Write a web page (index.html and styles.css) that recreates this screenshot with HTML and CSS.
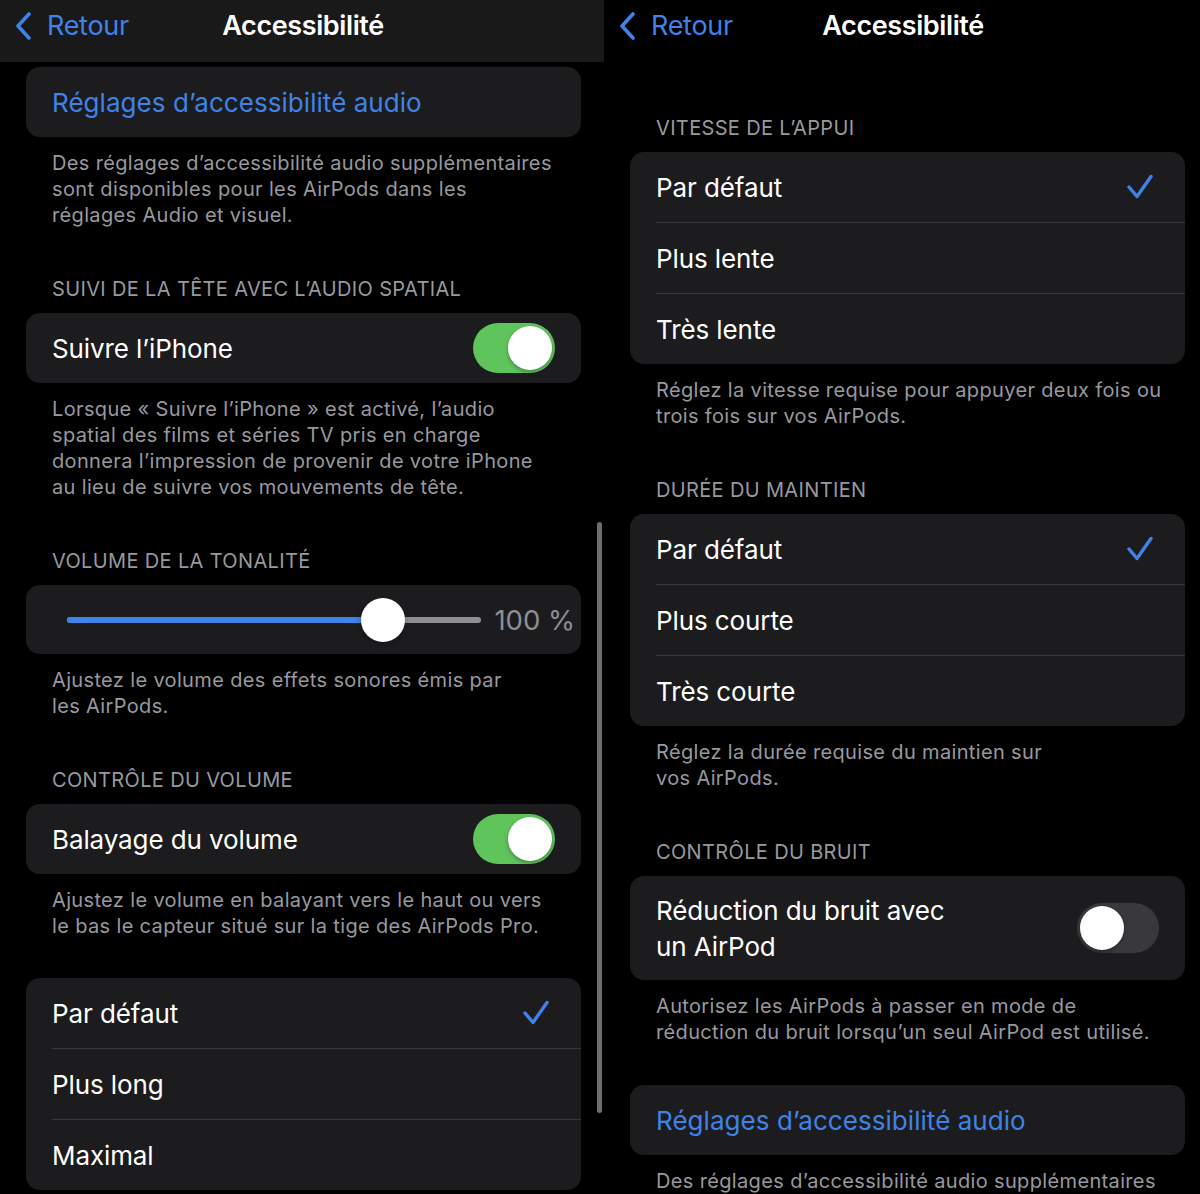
FILE: index.html
```html
<!DOCTYPE html>
<html lang="fr">
<head>
    <meta charset="UTF-8">
    <meta name="viewport" content="width=device-width, initial-scale=1.0">
    <title>Accessibilité</title>
    <link rel="stylesheet" href="styles.css">
</head>
<body>
    <!-- Ecran gauche (défilé) -->
    <div class="screen screen-left">
        <div class="navbar navbar-grey">
            <a class="back" href="#">
                <svg class="chevron" width="17" height="28" viewBox="0 0 17 28"><path d="M14 2 L3 14 L14 26" fill="none" stroke="#3f83e8" stroke-width="3.6" stroke-linecap="round" stroke-linejoin="round"/></svg>
                <span>Retour</span>
            </a>
            <div class="title">Accessibilité</div>
            <div></div>
        </div>

        <div class="content">
            <div class="card first">
                <div class="row"><div class="row-body link">Réglages d’accessibilité audio</div></div>
            </div>
            <p class="footer">Des réglages d’accessibilité audio supplémentaires<br>sont disponibles pour les AirPods dans les<br>réglages Audio et visuel.</p>

            <h3 class="section">Suivi de la tête avec l’audio spatial</h3>
            <div class="card">
                <div class="row"><div class="row-body">Suivre l’iPhone <span class="toggle on"><span class="knob"></span></span></div></div>
            </div>
            <p class="footer">Lorsque « Suivre l’iPhone » est activé, l’audio<br>spatial des films et séries TV pris en charge<br>donnera l’impression de provenir de votre iPhone<br>au lieu de suivre vos mouvements de tête.</p>

            <h3 class="section">Volume de la tonalité</h3>
            <div class="card">
                <div class="slider-row">
                    <div class="track">
                        <div class="fill" style="width: 76.3%"></div>
                        <div class="thumb" style="left: 76.3%"></div>
                    </div>
                    <span class="value">100 %</span>
                </div>
            </div>
            <p class="footer">Ajustez le volume des effets sonores émis par<br>les AirPods.</p>

            <h3 class="section">Contrôle du volume</h3>
            <div class="card">
                <div class="row"><div class="row-body">Balayage du volume <span class="toggle on"><span class="knob"></span></span></div></div>
            </div>
            <p class="footer">Ajustez le volume en balayant vers le haut ou vers<br>le bas le capteur situé sur la tige des AirPods Pro.</p>

            <div class="card list-gap">
                <div class="row"><div class="row-body">Par défaut <svg class="check" width="32" height="26" viewBox="0 0 32 26"><path d="M2 13 L10 22.5 L24 2.5" fill="none" stroke="#3f83e8" stroke-width="3.4" stroke-linecap="round" stroke-linejoin="round"/></svg></div></div>
                <div class="row"><div class="row-body">Plus long</div></div>
                <div class="row"><div class="row-body">Maximal</div></div>
            </div>
        </div>

        <div class="scrollbar"></div>
    </div>

    <!-- Ecran droit -->
    <div class="screen screen-right">
        <div class="navbar">
            <a class="back" href="#">
                <svg class="chevron" width="17" height="28" viewBox="0 0 17 28"><path d="M14 2 L3 14 L14 26" fill="none" stroke="#3f83e8" stroke-width="3.6" stroke-linecap="round" stroke-linejoin="round"/></svg>
                <span>Retour</span>
            </a>
            <div class="title">Accessibilité</div>
            <div></div>
        </div>

        <div class="content">
            <h3 class="section top">Vitesse de l’appui</h3>
            <div class="card">
                <div class="row"><div class="row-body">Par défaut <svg class="check" width="32" height="26" viewBox="0 0 32 26"><path d="M2 13 L10 22.5 L24 2.5" fill="none" stroke="#3f83e8" stroke-width="3.4" stroke-linecap="round" stroke-linejoin="round"/></svg></div></div>
                <div class="row"><div class="row-body">Plus lente</div></div>
                <div class="row"><div class="row-body">Très lente</div></div>
            </div>
            <p class="footer">Réglez la vitesse requise pour appuyer deux fois ou<br>trois fois sur vos AirPods.</p>

            <h3 class="section">Durée du maintien</h3>
            <div class="card">
                <div class="row"><div class="row-body">Par défaut <svg class="check" width="32" height="26" viewBox="0 0 32 26"><path d="M2 13 L10 22.5 L24 2.5" fill="none" stroke="#3f83e8" stroke-width="3.4" stroke-linecap="round" stroke-linejoin="round"/></svg></div></div>
                <div class="row"><div class="row-body">Plus courte</div></div>
                <div class="row"><div class="row-body">Très courte</div></div>
            </div>
            <p class="footer">Réglez la durée requise du maintien sur<br>vos AirPods.</p>

            <h3 class="section">Contrôle du bruit</h3>
            <div class="card">
                <div class="row"><div class="row-body tall">Réduction du bruit avec<br>un AirPod <span class="toggle"><span class="knob"></span></span></div></div>
            </div>
            <p class="footer">Autorisez les AirPods à passer en mode de<br>réduction du bruit lorsqu’un seul AirPod est utilisé.</p>

            <div class="card list-gap-small">
                <div class="row"><div class="row-body link">Réglages d’accessibilité audio</div></div>
            </div>
            <p class="footer">Des réglages d’accessibilité audio supplémentaires</p>
        </div>
    </div>
</body>
</html>
```

FILE: styles.css
```css
* {
    box-sizing: border-box;
}

body {
    margin: 0;
    background-color: #000;
    font-family: Inter, "Noto Sans", sans-serif;
    color: #fff;
    display: flex;
    height: 1194px;
    overflow: hidden;
}

.screen {
    height: 1194px;
    overflow: hidden;
    position: relative;
}

.screen-left {
    width: 604px;
}

.screen-right {
    width: 596px;
}

/* Barre de navigation */
.navbar {
    height: 62px;
    padding-bottom: 11px;
    display: grid;
    grid-template-columns: 1fr auto 1fr;
    align-items: center;
    background-color: #000;
}

.navbar-grey {
    background-color: #191919;
}

.back {
    display: flex;
    align-items: center;
    gap: 15px;
    padding-left: 15px;
    color: #3f83e8;
    text-decoration: none;
    font-size: 27px;
    letter-spacing: -0.3px;
}

.chevron {
    display: block;
}

.title {
    font-size: 27px;
    font-weight: 600;
    letter-spacing: -0.4px;
    padding-left: 2px;
}

/* Contenu */
.content {
    padding-left: 26px;
}

.card {
    width: 555px;
    background-color: #1c1c1e;
    border-radius: 14px;
    overflow: hidden;
}

.card.first {
    margin-top: 5px;
}

.row {
    padding-left: 26px;
}

.row-body {
    height: 70px;
    padding-right: 26px;
    display: flex;
    align-items: center;
    justify-content: space-between;
    font-size: 26px;
    letter-spacing: -0.1px;
}

.row + .row .row-body {
    height: 71px;
    border-top: 1px solid #38383a;
}

.row-body.tall {
    height: 104px;
    line-height: 36px;
    display: block;
    position: relative;
    padding-top: 17px;
}

.row-body.tall .toggle {
    position: absolute;
    right: 26px;
    top: 27px;
}

.link {
    color: #3f83e8;
    letter-spacing: 0.05px;
}

.footer {
    margin: 0;
    padding: 13px 26px 0;
    font-size: 20px;
    line-height: 26px;
    color: #98989e;
    letter-spacing: 0.35px;
}

.section {
    margin: 46px 0 11px;
    padding: 2px 26px 0;
    font-size: 20px;
    line-height: 26px;
    font-weight: 400;
    text-transform: uppercase;
    color: #98989e;
    letter-spacing: 0.35px;
}

.section.top {
    margin-top: 51px;
}

.list-gap {
    margin-top: 39px;
}

.list-gap-small {
    margin-top: 40px;
}

/* Interrupteur */
.toggle {
    width: 82px;
    height: 50px;
    border-radius: 25px;
    background-color: #39393d;
    position: relative;
    flex-shrink: 0;
}

.toggle.on {
    background-color: #5fc45c;
}

.knob {
    position: absolute;
    top: 3px;
    left: 3px;
    width: 44px;
    height: 44px;
    border-radius: 50%;
    background-color: #fff;
    box-shadow: 0 2px 4px rgba(0, 0, 0, 0.3);
}

.toggle.on .knob {
    left: 35px;
}

.check {
    display: block;
    margin-right: 0;
}

/* Curseur */
.slider-row {
    height: 69px;
    display: flex;
    align-items: center;
    padding: 0 6px 0 41px;
    gap: 13px;
}

.track {
    flex: 1;
    height: 6px;
    background-color: #8e8e93;
    border-radius: 3px;
    position: relative;
}

.fill {
    height: 100%;
    background-color: #3f83e8;
    border-radius: 3px 0 0 3px;
}

.thumb {
    position: absolute;
    top: 50%;
    width: 44px;
    height: 44px;
    margin: -22px 0 0 -22px;
    border-radius: 50%;
    background-color: #fff;
    box-shadow: 0 2px 6px rgba(0, 0, 0, 0.3);
}

.value {
    font-size: 27.5px;
    color: #8e8e93;
    letter-spacing: 0;
}

.scrollbar {
    position: absolute;
    left: 597px;
    top: 522px;
    width: 5px;
    height: 591px;
    border-radius: 3px;
    background-color: #6e6e72;
}
```
